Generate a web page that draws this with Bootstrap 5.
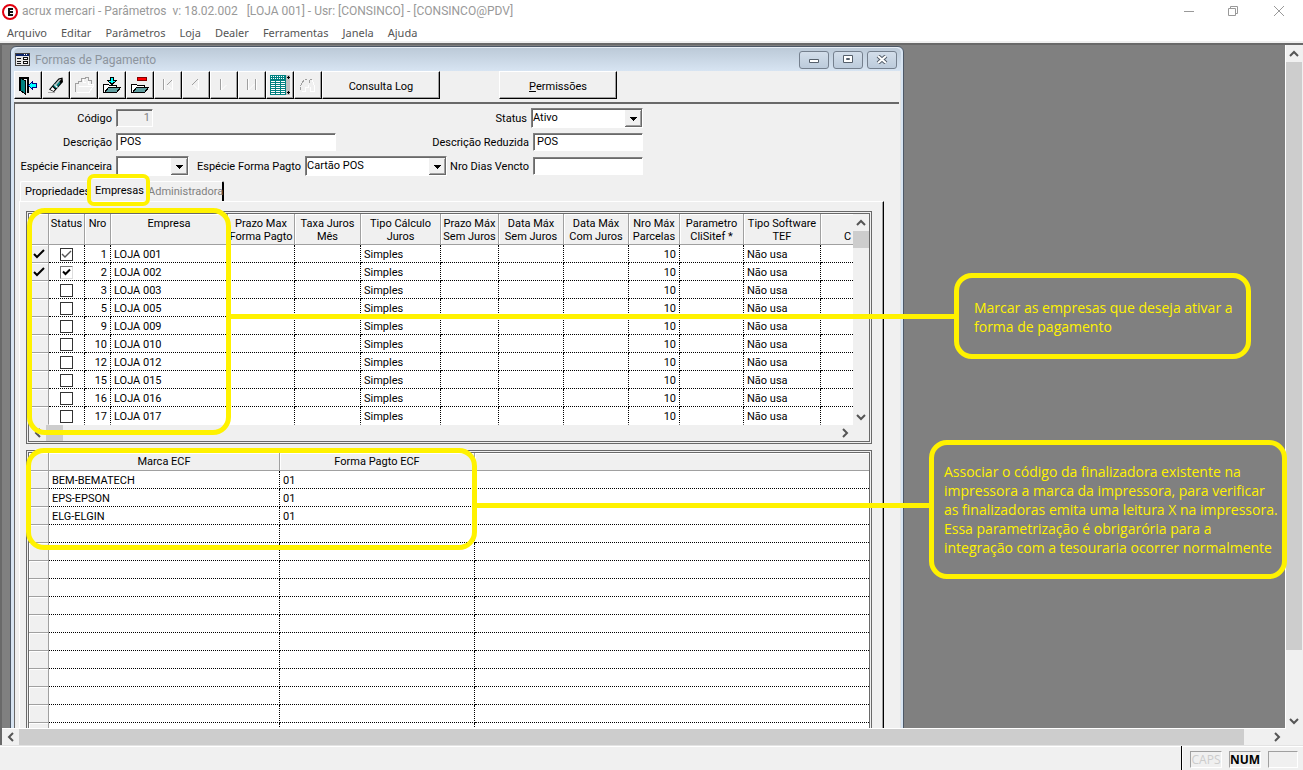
<!DOCTYPE html>
<html lang="pt-BR">
<head>
<meta charset="utf-8">
<meta name="viewport" content="width=device-width, initial-scale=1">
<title>acrux mercari - Parâmetros</title>
<link href="https://cdn.jsdelivr.net/npm/bootstrap@5.3.0/dist/css/bootstrap.min.css" rel="stylesheet">
<style>
  :root { --face:#f0f0f0; --shade:#a0a0a0; --dark:#696969; --note:#fff200; }
  body { font-family:Roboto,"Liberation Sans",sans-serif; font-size:11px; line-height:13px; color:#000; background:var(--face); }
  svg { display:block; }
  button { padding:0; border:0; background:none; color:inherit; }
  .titlebar { height:23px; background:#fff; color:#999; font:12px/23px Roboto,sans-serif; }
  .title-text { white-space:pre; }
  .win-btn { width:45px; height:20px; }
  .menubar { height:20px; background:#fff; font:11px/19px "Noto Sans",sans-serif; border-bottom:2px solid var(--face); gap:14px; padding:0 7px; }
  .menubar a { color:#555; text-decoration:none; }
  .mdi { border-top:2px solid var(--dark); border-left:2px solid var(--dark); min-height:0; }
  .desk { background:#808080; border-bottom:1px solid #fff; border-right:1px solid #fff; min-width:0; }
  /* scroll bars */
  .sb { background:var(--face); display:flex; flex:none; }
  .sb button { width:17px; height:17px; flex:none; display:flex; align-items:center; justify-content:center; }
  .sb-v { width:16px; flex-direction:column; }
  .sb-h { height:16px; }
  .sb-v button { width:16px; }
  .sb-h button { height:16px; }
  .thumb { background:#cdcdcd; }
  .sb svg { fill:none; stroke:#555; stroke-width:2; }
  .edge { margin-right:1px; }
  .corner { margin-right:18px; }
  /* child window */
  .child { width:894px; margin-left:8px; height:720px; margin-top:1px; border:1px solid #4d5866; border-radius:6px 6px 0 0; background:#d7e4f2; padding:0 2px 0 3px; }
  .child-title { height:24px; background:linear-gradient(#bccad8,#d7e4f2); color:#8d959e; font:12px/24px Roboto,sans-serif; border-top:1px solid #e8eef5; border-radius:5px 5px 0 0; padding-left:1px; }
  .cap { width:30px; height:18px; border:1px solid #75808e; border-radius:3px; background:linear-gradient(#d3deea,#bccbdb); display:flex; align-items:center; justify-content:center; }
  .client { background:var(--face); border-right:1px solid #e3e3e3; height:100%; }
  .toolbar { height:31px; }
  .tool { width:28px; height:28px; border:1px solid; border-color:#fff #000 #000 #fff; background:var(--face); display:flex; align-items:center; justify-content:center; box-shadow:inset -1px -1px #a0a0a0; }
  .tool-wide { width:118px; padding-top:2px; }
  .tool-gap { width:59px; }
  .form-area { border-top:2px solid var(--dark); border-left:1px solid var(--dark); padding-top:2px; margin-right:1px; }
  .frow { height:24px; width:628px; }
  .lbl-a { width:97px; text-align:right; margin-right:4px; }
  .fld { border:1px solid; border-color:#808080 #fff #fff #808080; box-shadow:inset 1px 1px #696969; border-radius:0; background:#fff; height:18px; padding:0 2px 2px 3px; font-size:11px; line-height:13px; color:#000; min-width:0; }
  .fld:disabled { background:var(--face); color:#808080; text-align:right; }
  select.fld { appearance:none; height:20px; padding:0 18px 1px 1px;
    background:#fff url("data:image/svg+xml,%3Csvg xmlns='http://www.w3.org/2000/svg' width='17' height='17' shape-rendering='crispEdges'%3E%3Cpath fill='%23f0f0f0' d='M0 0h17v17H0z'/%3E%3Cpath fill='%23696969' d='M16 0h1v17H0v-1h16z'/%3E%3Cpath fill='%23a0a0a0' d='M15 1h1v15H1v-1h14z'/%3E%3Cpath d='M5 7h7v1H5zM6 8h5v1H6zM7 9h3v1H7zM8 10h1v1H8z'/%3E%3C/svg%3E") no-repeat right 1px; }
  .w-cod { width:37px; } .w-desc { width:220px; } .w-esp { width:73px; } .w-forma { width:142px; } .w-red { width:110px; } .w-status { width:112px; }
  .tabstrip { height:23px; align-items:flex-end; padding-left:5px; }
  .tabbtn { width:68px; height:20px; border-top:1px solid #fff; border-left:1px solid #fff; padding:0 0 0 4px; line-height:20px; border-radius:2px 2px 0 0; text-align:left; }
  .tab-on { width:58px; height:23px; padding:0 6px; line-height:21px; }
  .tab-off { width:78px; color:#808080; border-right:2px solid #000; padding:0 1px; }
  .page { margin-left:4px; width:865px; height:600px; border:1px solid; border-color:#fff #000 #000 #fff; box-shadow:inset -1px 0 #a0a0a0; padding:9px 6px; gap:6px; }
  .grid-box { width:846px; border:3px double var(--dark); background:var(--face); }
  .grid { table-layout:fixed; border-collapse:separate; border-spacing:0; background:#fff; width:840px; }
  .grid th { font-weight:400; background:var(--face); border-right:1px solid var(--shade); border-bottom:1px solid var(--shade); box-shadow:inset 1px 1px #fff; text-align:center; vertical-align:top; padding:3px 0 0; overflow:hidden; white-space:nowrap; }
  .grid td { height:18px; padding:1px 3px 0; border-right:1px dotted #000; border-bottom:1px dotted #000; white-space:nowrap; overflow:hidden; }
  .grid tbody th { padding:0; height:18px; vertical-align:middle; }
  .grid-top { flex:1; min-width:0; overflow:hidden; }
  .grid-top thead th { height:31px; }
  .grid-top tbody tr:last-child > * { border-bottom-color:transparent; }
  .grid-low thead th { height:18px; padding-top:2px; }
  .grid td:last-child, .grid th:last-child { border-right:0; }
  .grid tbody th:first-child { border-right:1px solid var(--shade); }
  .grid thead th.cut { text-align:left; padding-left:23px; }
  .c20{width:20px}.c36{width:36px}.c26{width:26px}.c117{width:117px}.c67{width:67px}.c66{width:66px}.c80{width:80px}.c58{width:58px}.c65{width:65px}.c51{width:51px}.c64{width:64px}.c77{width:77px}.c231{width:231px}.c195{width:195px}
  .tick { appearance:none; width:13px; height:13px; border:1px solid #333; background:#fff center/11px no-repeat; margin:1px auto 0; display:block; }
  .tick:checked { background-image:url("data:image/svg+xml,%3Csvg xmlns='http://www.w3.org/2000/svg' viewBox='0 0 11 11'%3E%3Cpath d='M1 5l3 3 6-6' fill='none' stroke='%23555' stroke-width='1.4'/%3E%3C/svg%3E"); }
  .tick.sunk:checked { border-color:#777 #ddd #ddd #777; background-image:url("data:image/svg+xml,%3Csvg xmlns='http://www.w3.org/2000/svg' viewBox='0 0 11 11'%3E%3Cpath d='M2 4.500l2.500 2.500 4.500-4.500' fill='none' stroke='%23000' stroke-width='2'/%3E%3C/svg%3E"); }
  /* notes laid over the desktop */
  .notes { position:absolute; inset:0; pointer-events:none; overflow:hidden; }
  .notes > * { position:absolute; }
  .ring { border:5px solid var(--note); border-radius:18px; }
  .ring-tab { border-width:4px; border-radius:7px; left:85px; top:129px; width:63px; height:32px; }
  .ring-a { left:25px; top:163px; width:204px; height:227px; }
  .ring-b { left:24px; top:403px; width:451px; height:102px; }
  .wire { height:5px; background:var(--note); }
  .wire-a { left:228px; top:269px; width:725px; }
  .wire-b { left:472px; top:458px; width:457px; }
  .bubble { color:var(--note); font:14px/19px "Open Sans",sans-serif; white-space:nowrap; }
  .bubble-a { left:952px; top:228px; width:297px; height:86px; padding:20px 15px; }
  .bubble-b { left:927px; top:395px; width:358px; height:139px; padding:17px 10px; }
  .status { height:25px; border-top:1px solid #e3e3e3; box-shadow:inset 0 1px #fff; padding:0 5px 0 0; }
  .divider { width:2px; background:#000; border-right:1px solid #fff; margin-right:7px; }
  .pane { width:32px; height:17px; margin:5px 7px 0 0; border:1px solid; border-color:var(--shade) #fff #fff var(--shade); font:12px/16px "Open Sans",sans-serif; text-align:center; }
  .pane-off { color:#ccc; }
  .pane-end { width:30px; margin-right:0; }
</style>
</head>
<body class="vh-100 overflow-hidden d-flex flex-column">
<header class="flex-shrink-0">
  <div class="titlebar d-flex align-items-center">
    <svg width="22" height="18" viewBox="-3 0 22 18"><circle cx="7" cy="9" r="7" fill="#fff" stroke="#e3000f" stroke-width="2"/><path d="M5 5h5v2H7v1h3v2H7v1h3v2H5z" fill="#111"/></svg>
    <span class="title-text">acrux mercari - Parâmetros  v: 18.02.002   [LOJA 001] - Usr: [CONSINCO] - [CONSINCO@PDV]</span>
    <div class="ms-auto d-flex">
      <button class="win-btn" aria-label="Minimizar"><svg class="mx-auto" width="16" height="12"><path d="M1 5.500h10" stroke="#999"/></svg></button>
      <button class="win-btn" aria-label="Restaurar"><svg class="mx-auto" width="16" height="12" fill="none" stroke="#999"><path d="M.5 2.500h7v7h-7zM2.500 2v-1.500h7v7H8"/></svg></button>
      <button class="win-btn" aria-label="Fechar"><svg class="mx-auto" width="16" height="12" stroke="#999"><path d="M1 0l10 10M11 0L1 10"/></svg></button>
    </div>
  </div>
  <nav class="menubar d-flex">
    <a href="#">Arquivo</a><a href="#">Editar</a><a href="#">Parâmetros</a><a href="#">Loja</a><a href="#">Dealer</a><a href="#">Ferramentas</a><a href="#">Janela</a><a href="#">Ajuda</a>
  </nav>
</header>

<main class="mdi flex-grow-1 d-flex flex-column position-relative">
  <div class="d-flex flex-grow-1 overflow-hidden">
    <div class="desk flex-grow-1 overflow-hidden">
      <section class="child">
        <div class="child-title d-flex align-items-center">
          <svg class="me-1" width="16" height="16" shape-rendering="crispEdges"><path fill="#444" d="M0 1h15v13H0z"/><path fill="#e8e8e8" d="M1 4h13v9H1z"/><path fill="#0a246a" d="M1 2h13v2H1z"/><path fill="#fff" d="M9 2h1v1H9zM11 2h1v1h-1z"/><path fill="#111" d="M2 6h4v1H2zM2 9h4v1H2zM2 11h4v1H2zM8 5h5v3H8zM8 9h5v3H8z"/><path fill="#fff" d="M9 6h3v1H9zM9 10h3v1H9z"/></svg>
          <span>Formas de Pagamento</span>
          <div class="ms-auto d-flex me-1 gap-1">
            <button class="cap" aria-label="Minimizar"><svg width="12" height="8"><path fill="#fff" stroke="#555f6b" d="M1.500 3.500h9v3h-9z"/></svg></button>
            <button class="cap" aria-label="Maximizar"><svg width="12" height="9" fill="#fff" stroke="#555f6b"><path d="M1.500.500h9v7h-9z"/><path d="M4.500 3.500h3v1h-3z"/></svg></button>
            <button class="cap" aria-label="Fechar"><svg width="12" height="9"><path d="M2 1l8 7M10 1L2 8" stroke="#555f6b" stroke-width="4"/><path d="M2 1l8 7M10 1L2 8" stroke="#fff" stroke-width="2"/></svg></button>
          </div>
        </div>
        <div class="client">
          <div class="toolbar d-flex">
            <button class="tool" aria-label="Sair"><svg width="20" height="20" shape-rendering="crispEdges"><path d="M1 2h10v16H9V4H3v12H1z"/><path fill="#008080" stroke="#000" d="M2.500 2.500l5 3.500v13l-5-3.500z"/><path fill="#0ff" stroke="#000080" d="M10.500 10.500l4-4v2h4v4h-4v2z"/></svg></button>
            <button class="tool" aria-label="Limpar"><svg width="20" height="20"><path d="M3 14.500L12.500 3.500l4-1 .5 4.500L8 17z"/><path fill="#008080" d="M7 11l5-5.500 2.500 2.500L10 13.500z"/><path fill="#fff" d="M4.500 14.500l2-2.500 2.500 2.500-1.500 1.500zM8 10l1-1 3 3-1 1z"/><path fill="#c0c0c0" d="M13 4.500l2.500-.5-6 7-1-1z"/><path stroke="#aaa" d="M2 17.500h7"/></svg></button>
            <button class="tool" aria-label="Abrir"><svg width="20" height="20" fill="none" shape-rendering="crispEdges"><path stroke="#fff" d="M3 17.500h12l4-6M9 4v3h3M14 5v4h5v3"/><path stroke="#a0a0a0" d="M1.500 17V8.500h3v-2h3v-3h4V2.500h3v3h3v3"/><path stroke="#fff" d="M5 11.500h13"/></svg></button>
            <button class="tool" aria-label="Salvar"><svg width="20" height="20" shape-rendering="crispEdges"><path fill="#fff" stroke="#000" d="M1.500 17.500v-8h5l1 1h7v7z"/><path fill="#5f9ea0" stroke="#000" d="M2.500 17.500l4-5h12l-4 5z"/><path fill="#0ff" stroke="#000" d="M8.500 2.500h3v3h3l-4.500 4-4.500-4h3z"/></svg></button>
            <button class="tool" aria-label="Excluir"><svg width="20" height="20" shape-rendering="crispEdges"><path fill="#fff" stroke="#000" d="M1.500 17.500v-8h5l1 1h7v7z"/><path fill="#5f9ea0" stroke="#000" d="M2.500 17.500l4-5h12l-4 5z"/><path fill="red" stroke="#800000" d="M7.500 2.500h9v3h-9z"/></svg></button>
            <button class="tool" aria-label="Primeiro"><svg width="20" height="20" fill="none"><path stroke="#a0a0a0" d="M5.500 4v11M14 5l-5 5"/><path stroke="#fff" d="M6.500 4v11M14.500 5v10l-5-5"/></svg></button>
            <button class="tool" aria-label="Anterior"><svg width="20" height="20" fill="none"><path stroke="#a0a0a0" d="M12 4l-6 6"/><path stroke="#fff" d="M12.500 5v10l-5-5"/></svg></button>
            <button class="tool" aria-label="Próximo"><svg width="20" height="20" fill="none"><path stroke="#a0a0a0" d="M6.500 4v11"/><path stroke="#fff" d="M7.500 4v11l5-5"/></svg></button>
            <button class="tool" aria-label="Último"><svg width="20" height="20" fill="none"><path stroke="#a0a0a0" d="M5.500 4v11M13.500 4v11"/><path stroke="#fff" d="M6.500 4v11l6-6M14.500 4v11"/></svg></button>
            <button class="tool" aria-label="Consulta"><svg width="20" height="20" shape-rendering="crispEdges"><path fill="#008080" d="M0 0h16v20H0z"/><path fill="#c0c0c0" d="M16 0h4v20h-4z"/><path stroke="#fff" stroke-dasharray="1 1" d="M1 1.500h14M1 3.500h14"/><path stroke="#fff" stroke-dasharray="4 1" d="M1 6.500h14M1 8.500h14M1 10.500h14M1 12.500h14M1 14.500h14M1 16.500h14M1 18.500h14"/><path d="M17 2h3v1h-3zM18 1h1v3h-1zM17 17h3v1h-3zM18 16h1v3h-1z"/></svg></button>
            <button class="tool" aria-label="Localizar"><svg width="20" height="20" fill="none" shape-rendering="crispEdges"><path stroke="#a0a0a0" stroke-dasharray="3 1" d="M2.500 15v-4l4-7h2M11.500 8V4h2"/><path stroke="#fff" d="M3.500 16.500h4v-4h3v-3M12.500 12v4.500h4v-5l-2-6"/></svg></button>
            <button class="tool tool-wide ms-0">Consulta Log</button>
            <span class="tool-gap"></span>
            <button class="tool tool-wide"><span><u>P</u>ermissões</span></button>
          </div>
          <form class="form-area" onsubmit="return false">
            <div class="frow d-flex align-items-center">
              <label class="lbl-a" for="cod">Código</label><input id="cod" class="fld w-cod" value="1" disabled>
              <label class="ms-auto me-1" for="status">Status</label><select id="status" class="fld w-status"><option>Ativo</option></select>
            </div>
            <div class="frow d-flex align-items-center">
              <label class="lbl-a" for="desc">Descrição</label><input id="desc" class="fld w-desc" value="POS">
              <label class="ms-auto me-1" for="red">Descrição Reduzida</label><input id="red" class="fld w-red" value="POS">
            </div>
            <div class="frow d-flex align-items-center">
              <label class="lbl-a" for="esp">Espécie Financeira</label><select id="esp" class="fld w-esp"><option></option></select>
              <label class="ms-2 me-1" for="forma">Espécie Forma Pagto</label><select id="forma" class="fld w-forma"><option>Cartão POS</option></select>
              <label class="ms-auto me-1" for="dias">Nro Dias Vencto</label><input id="dias" class="fld w-red">
            </div>
            <div class="tabstrip d-flex">
              <button class="tabbtn">Propriedades</button><button class="tabbtn tab-on">Empresas</button><button class="tabbtn tab-off">Administradora</button>
            </div>
            <div class="page d-flex flex-column">
              <div class="grid-box">
                <div class="d-flex">
                  <div class="grid-top">
                    <table class="grid">
                      <colgroup><col class="c20"><col class="c36"><col class="c26"><col class="c117"><col class="c67"><col class="c66"><col class="c80"><col class="c58"><col class="c65"><col class="c65"><col class="c51"><col class="c64"><col class="c77"><col></colgroup>
                      <thead><tr><th></th><th>Status</th><th>Nro</th><th>Empresa</th><th>Prazo Max<br>Forma Pagto</th><th>Taxa Juros<br>Mês</th><th>Tipo Cálculo<br>Juros</th><th>Prazo Máx<br>Sem Juros</th><th>Data Máx<br>Sem Juros</th><th>Data Máx<br>Com Juros</th><th>Nro Máx<br>Parcelas</th><th>Parametro<br>CliSitef *</th><th>Tipo Software<br>TEF</th><th class="cut"><br>C</th></tr></thead>
                      <tbody id="lojas"></tbody>
                    </table>
                  </div>
                  <div class="sb sb-v"><button aria-label="Subir"><svg width="10" height="8"><path d="M1 6l4-4 4 4"/></svg></button><div class="thumb" style="height:17px"></div><button class="mt-auto" aria-label="Descer"><svg width="10" height="8"><path d="M1 2l4 4 4-4"/></svg></button></div>
                </div>
                <div class="sb sb-h me-3"><button aria-label="Esquerda"><svg width="8" height="10"><path d="M6 1L2 5l4 4"/></svg></button><div class="thumb" style="width:17px"></div><button class="ms-auto" aria-label="Direita"><svg width="8" height="10"><path d="M2 1l4 4-4 4"/></svg></button></div>
              </div>
              <div class="grid-box">
                <table class="grid grid-low">
                  <colgroup><col class="c20"><col class="c231"><col class="c195"><col></colgroup>
                  <thead><tr><th></th><th>Marca ECF</th><th>Forma Pagto ECF</th><th></th></tr></thead>
                  <tbody id="ecf"></tbody>
                </table>
              </div>
            </div>
          </form>
        </div>
      </section>
    </div>
    <div class="sb sb-v edge"><button aria-label="Subir"><svg width="10" height="8"><path d="M1 6l4-4 4 4"/></svg></button><div class="thumb" style="height:86%"></div><button class="mt-auto" aria-label="Descer"><svg width="10" height="8"><path d="M1 2l4 4 4-4"/></svg></button></div>
  </div>
  <div class="sb sb-h corner"><button aria-label="Esquerda"><svg width="8" height="10"><path d="M6 1L2 5l4 4"/></svg></button><div class="thumb" style="width:95.500%"></div><button class="ms-auto" aria-label="Direita"><svg width="8" height="10"><path d="M2 1l4 4-4 4"/></svg></button></div>
  <div class="notes">
    <div class="ring ring-tab"></div>
    <div class="ring ring-a"></div><div class="wire wire-a"></div>
    <div class="ring ring-b"></div><div class="wire wire-b"></div>
    <div class="ring bubble bubble-a">Marcar as empresas que deseja ativar a<br>forma de pagamento</div>
    <div class="ring bubble bubble-b">Associar o código da finalizadora existente na<br>impressora a marca da impressora, para verificar<br>as finalizadoras emita uma leitura X na impressora.<br>Essa parametrização é obrigarória para a<br>integração com a tesouraria ocorrer normalmente</div>
  </div>
</main>
<footer class="status d-flex justify-content-end flex-shrink-0">
  <div class="divider"></div>
  <div class="pane pane-off">CAPS</div><div class="pane fw-bold">NUM</div><div class="pane pane-end"></div>
</footer>
<script src="https://cdn.jsdelivr.net/npm/bootstrap@5.3.0/dist/js/bootstrap.bundle.min.js"></script>
<script>
  const mark = '<svg class="mx-auto" width="14" height="10"><path d="M2 5l3 3 7-7" fill="none" stroke="#000" stroke-width="2"/></svg>';
  const on = { 1: 'checked', 2: 'checked' };
  document.getElementById('lojas').innerHTML = [1, 2, 3, 5, 9, 10, 12, 15, 16, 17].map(n => {
    const name = 'LOJA ' + String(n).padStart(3, '0');
    return `<tr><th>${on[n] ? mark : ''}</th><td><input type="checkbox" class="tick ${n === 2 ? 'sunk' : ''}" aria-label="${name}" ${on[n] || ''}></td>
      <td class="text-end">${n}</td><td>${name}</td><td></td><td></td><td>Simples</td><td></td><td></td><td></td>
      <td class="text-end">10</td><td></td><td>Não usa</td><td></td></tr>`;
  }).join('');
  const brands = ['BEM-BEMATECH', 'EPS-EPSON', 'ELG-ELGIN'];
  document.getElementById('ecf').innerHTML = Array.from({ length: 16 }, (_, i) =>
    `<tr><th></th><td>${brands[i] || ''}</td><td>${brands[i] ? '01' : ''}</td><td></td></tr>`).join('');
</script>
</body>
</html>
